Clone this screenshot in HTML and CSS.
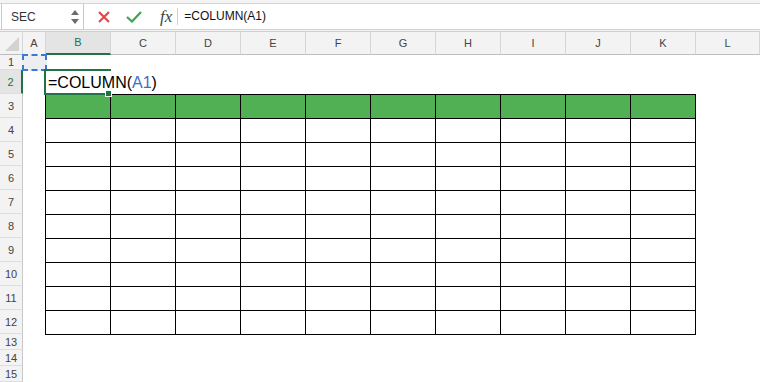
FILE: index.html
```html
<!DOCTYPE html>
<html>
<head>
    <title>COLUMN</title>
    <link rel="stylesheet" href="styles.css">
</head>
<body>

<div class="top">
    <div class="bar">
        <div class="namebox">
            <span>SEC</span>
            <svg class="spin" width="8" height="16" viewBox="0 0 8 16">
                <polygon points="4,1 8,6 0,6" fill="#6b6b6b"/>
                <polygon points="0,10 8,10 4,15" fill="#6b6b6b"/>
            </svg>
        </div>
        <div class="btns">
            <svg class="cancel" width="12" height="12" viewBox="0 0 12 12">
                <path d="M1 1 L11 11 M11 1 L1 11" stroke="#e0484c" stroke-width="2.2" fill="none"/>
            </svg>
            <svg class="enter" width="16" height="12" viewBox="0 0 16 12">
                <path d="M1 6 L6 10.5 L15 1" stroke="#3ea54e" stroke-width="2.2" fill="none"/>
            </svg>
            <span class="fx">fx</span>
        </div>
        <div class="formula">=COLUMN(A1)</div>
    </div>
</div>

<div class="sheet">
    <div class="corner">
        <svg width="14" height="14" viewBox="0 0 14 14"><polygon points="14,0 14,14 0,14" fill="#d3d3d3"/></svg>
    </div>
    <div class="ch">A</div>
    <div class="ch sel">B</div>
    <div class="ch">C</div>
    <div class="ch">D</div>
    <div class="ch">E</div>
    <div class="ch">F</div>
    <div class="ch">G</div>
    <div class="ch">H</div>
    <div class="ch">I</div>
    <div class="ch">J</div>
    <div class="ch">K</div>
    <div class="ch">L</div>

    <div class="rh">1</div>
    <div class="rh sel">2</div>
    <div class="rh">3</div>
    <div class="rh">4</div>
    <div class="rh">5</div>
    <div class="rh">6</div>
    <div class="rh">7</div>
    <div class="rh">8</div>
    <div class="rh">9</div>
    <div class="rh">10</div>
    <div class="rh">11</div>
    <div class="rh">12</div>
    <div class="rh">13</div>
    <div class="rh">14</div>
    <div class="rh">15</div>

    <div class="ref"></div>

    <div class="tb">
        <div class="c hd"></div><div class="c hd"></div><div class="c hd"></div><div class="c hd"></div><div class="c hd"></div>
        <div class="c hd"></div><div class="c hd"></div><div class="c hd"></div><div class="c hd"></div><div class="c hd"></div>
        <div class="c"></div><div class="c"></div><div class="c"></div><div class="c"></div><div class="c"></div>
        <div class="c"></div><div class="c"></div><div class="c"></div><div class="c"></div><div class="c"></div>
        <div class="c"></div><div class="c"></div><div class="c"></div><div class="c"></div><div class="c"></div>
        <div class="c"></div><div class="c"></div><div class="c"></div><div class="c"></div><div class="c"></div>
        <div class="c"></div><div class="c"></div><div class="c"></div><div class="c"></div><div class="c"></div>
        <div class="c"></div><div class="c"></div><div class="c"></div><div class="c"></div><div class="c"></div>
        <div class="c"></div><div class="c"></div><div class="c"></div><div class="c"></div><div class="c"></div>
        <div class="c"></div><div class="c"></div><div class="c"></div><div class="c"></div><div class="c"></div>
        <div class="c"></div><div class="c"></div><div class="c"></div><div class="c"></div><div class="c"></div>
        <div class="c"></div><div class="c"></div><div class="c"></div><div class="c"></div><div class="c"></div>
        <div class="c"></div><div class="c"></div><div class="c"></div><div class="c"></div><div class="c"></div>
        <div class="c"></div><div class="c"></div><div class="c"></div><div class="c"></div><div class="c"></div>
        <div class="c"></div><div class="c"></div><div class="c"></div><div class="c"></div><div class="c"></div>
        <div class="c"></div><div class="c"></div><div class="c"></div><div class="c"></div><div class="c"></div>
        <div class="c"></div><div class="c"></div><div class="c"></div><div class="c"></div><div class="c"></div>
        <div class="c"></div><div class="c"></div><div class="c"></div><div class="c"></div><div class="c"></div>
        <div class="c"></div><div class="c"></div><div class="c"></div><div class="c"></div><div class="c"></div>
        <div class="c"></div><div class="c"></div><div class="c"></div><div class="c"></div><div class="c"></div>
    </div>

    <div class="editor">=COLUMN(<span class="arg">A1</span>)</div>
</div>

</body>
</html>
```

FILE: styles.css
```css
body, html {
    margin: 0;
    font-family: "Liberation Sans", Arial, sans-serif;
    background: #fff;
    overflow: hidden;
}

.top {
    background: #f3f3f3;
    padding: 3px 0 1px;
}

.bar {
    display: flex;
    height: 25px;
    background: #fff;
    border-top: 1px solid #d4d4d4;
    border-bottom: 1px solid #d0d0d0;
}

.namebox {
    display: flex;
    align-items: center;
    justify-content: space-between;
    width: 83px;
    margin-left: 1px;
    padding: 0 4px 0 9px;
    box-sizing: border-box;
    border-left: 1px solid #c8c8c8;
    border-right: 1px solid #c8c8c8;
    font-size: 12px;
    color: #333;
}

.btns {
    display: flex;
    align-items: center;
    padding-left: 14px;
}

.enter {
    margin-left: 16px;
}

.fx {
    margin-left: 18px;
    padding-right: 5px;
    border-right: 1px solid #d0d0d0;
    font-family: "Liberation Serif", serif;
    font-style: italic;
    font-size: 17px;
    line-height: 17px;
    color: #444;
}

.formula {
    padding-left: 6px;
    font-size: 12px;
    line-height: 25px;
    color: #111;
}

.sheet {
    display: grid;
    grid-template-columns: 23px 23px repeat(10, 65px) 64px;
    grid-template-rows: 24px 15px 24px repeat(10, 24px) repeat(3, 16px);
}

.corner, .ch {
    background: #f3f3f3;
    border-top: 1px solid #cfcfcf;
    border-bottom: 1px solid #bdbdbd;
    border-right: 1px solid #d6d6d6;
}

.corner {
    display: flex;
    align-items: flex-end;
    justify-content: flex-end;
    padding: 0 3px 3px 0;
}

.ch {
    font-size: 11px;
    line-height: 22px;
    text-align: center;
    color: #444;
}

.ch.sel {
    background: #e4e4e4;
    color: #217346;
    border-bottom: 2px solid #217346;
    line-height: 21px;
}

.rh {
    grid-column: 1;
    background: #f3f3f3;
    border-right: 1px solid #c8c8c8;
    border-bottom: 1px solid #dedede;
    display: flex;
    align-items: center;
    justify-content: center;
    font-size: 11px;
    color: #444;
}

.rh.sel {
    background: #e4e4e4;
    color: #217346;
    border-right: 2px solid #217346;
}

.ref {
    grid-column: 2;
    grid-row: 2;
    margin: -1px;
    background: #eceef1;
    border: 2px dashed #3a78d6;
}

.tb {
    grid-column: 3 / 13;
    grid-row: 4 / 14;
    align-self: start;
    justify-self: start;
    margin-left: -1px;
    display: grid;
    grid-template-columns: repeat(10, 65px);
    grid-auto-rows: 24px;
    border-right: 1px solid #000;
    border-bottom: 1px solid #000;
}

.c {
    border-left: 1px solid #000;
    border-top: 1px solid #000;
}

.hd {
    background: #51b054;
}

.editor {
    grid-column: 3;
    grid-row: 3;
    position: relative;
    z-index: 1;
    margin: -1px 0 -1px -2px;
    padding: 2px 0 0 2px;
    border: 2px solid #217346;
    border-right: none;
    font-size: 16px;
    line-height: 20px;
    white-space: nowrap;
    color: #000;
}

.editor::after {
    content: "";
    position: absolute;
    right: -1px;
    bottom: -4px;
    width: 5px;
    height: 5px;
    background: #217346;
    border: 1px solid #fff;
}

.arg {
    color: #3a6fc8;
}
```
